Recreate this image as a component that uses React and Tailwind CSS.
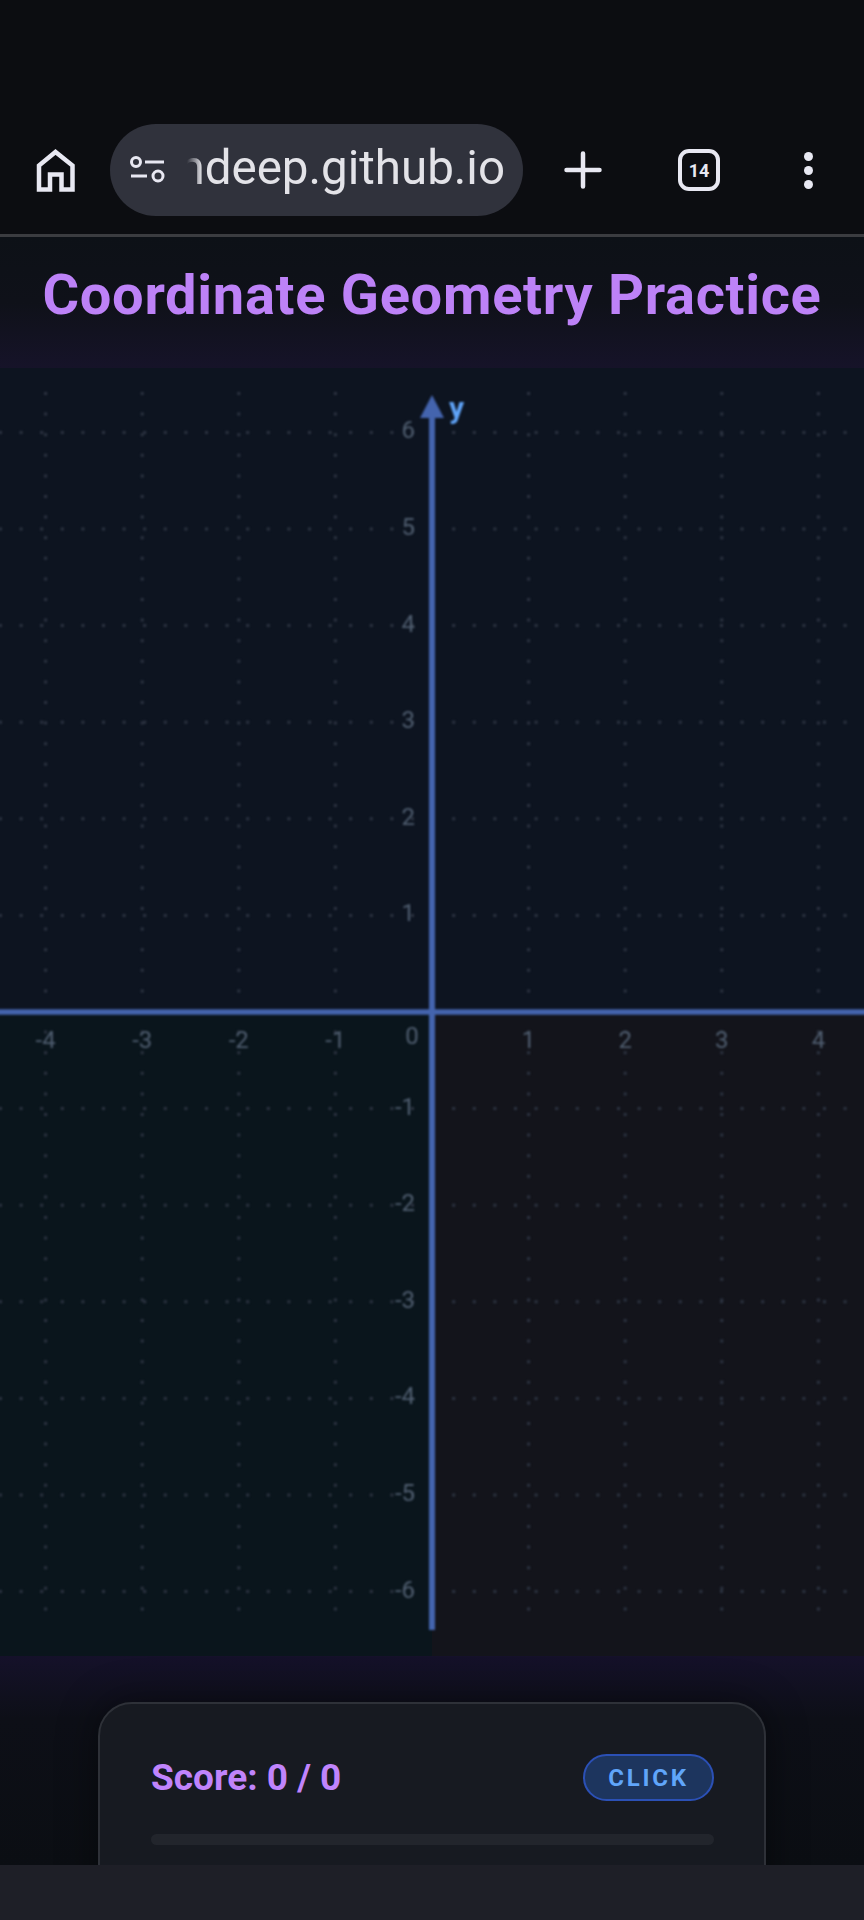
import React from 'react';

const ORIGIN_X = 432;
const ORIGIN_Y = 644;
const UNIT = 96.6;
const X_TICKS = [-4, -3, -2, -1, 1, 2, 3, 4];
const Y_TICKS = [6, 5, 4, 3, 2, 1, -1, -2, -3, -4, -5, -6];

const BrowserBar = () => (
  <header className="h-[237px] shrink-0 flex items-end bg-[#0c0d11] border-b-[3px] border-[#3b3c40] text-[#e8e8f2] pb-[18px]">
    <div className="h-[92px] w-full flex items-center">
      <svg width="40" height="43" viewBox="0 0 40 43" className="ml-[36px] shrink-0" fill="none" stroke="currentColor" strokeWidth="4.500">
        <path d="M3 40.500V16.500L19.500 3L36.500 16.500V40.500H25.500V25.500H14V40.500Z" strokeLinejoin="miter" />
      </svg>
      <div className="ml-[34px] w-[413px] h-[92px] shrink-0 rounded-full bg-[#30323c] flex items-center overflow-hidden">
        <svg width="36" height="30" viewBox="0 0 36 30" className="ml-[20px] shrink-0" fill="none" stroke="currentColor" strokeWidth="3">
          <circle cx="6" cy="7" r="4.500" />
          <path d="M15 7H34M1 21H17" />
          <circle cx="28" cy="21" r="5" />
        </svg>
        <div className="ml-[18px] w-[321px] shrink-0 overflow-hidden flex justify-end pb-[2px] [mask-image:linear-gradient(90deg,transparent_3px,black_18px)]">
          <span className="whitespace-nowrap text-[47.500px] leading-none text-[#e3e3e8] font-['Roboto',sans-serif]">
            ndeep.github.io
          </span>
        </div>
      </div>
      <svg width="38" height="38" viewBox="0 0 38 38" className="ml-[41px] shrink-0" fill="none" stroke="currentColor" strokeWidth="4.500" strokeLinecap="round">
        <path d="M19 2.500V35.500M2.500 19H35.500" />
      </svg>
      <div className="ml-[76px] w-[42px] h-[42px] shrink-0 rounded-[11px] border-[4px] border-[#e8e8f2] flex items-center justify-center text-[18px] font-bold font-['Roboto',sans-serif]">
        14
      </div>
      <div className="ml-[84px] flex flex-col gap-[5px] shrink-0">
        <span className="block w-[9px] h-[9px] rounded-full bg-[#e8e8f2]" />
        <span className="block w-[9px] h-[9px] rounded-full bg-[#e8e8f2]" />
        <span className="block w-[9px] h-[9px] rounded-full bg-[#e8e8f2]" />
      </div>
    </div>
  </header>
);

const Chart = () => (
  <svg width="864" height="1288" viewBox="0 0 864 1288" className="block shrink-0">
    <rect x="0" y="0" width="864" height={ORIGIN_Y} fill="#0d1420" />
    <rect x="0" y={ORIGIN_Y} width={ORIGIN_X} height={1288 - ORIGIN_Y} fill="#0a151c" />
    <rect x={ORIGIN_X} y={ORIGIN_Y} width={864 - ORIGIN_X} height={1288 - ORIGIN_Y} fill="#13141b" />
    <g className="blur-[0.9px]">
      {/* dotted grid */}
      {Y_TICKS.map((t) => (
        <line key={t} x1="-1" x2="864" y1={ORIGIN_Y - t * UNIT} y2={ORIGIN_Y - t * UNIT} stroke="#2d3442" strokeWidth="3" strokeDasharray="3 17.600" />
      ))}
      {X_TICKS.map((t) => (
        <line key={t} x1={ORIGIN_X + t * UNIT} x2={ORIGIN_X + t * UNIT} y1="24" y2="1250" stroke="#2d3442" strokeWidth="3" strokeDasharray="3 17.600" />
      ))}
      {/* axes */}
      <line x1="-4" x2="868" y1={ORIGIN_Y} y2={ORIGIN_Y} stroke="#4464ae" strokeWidth="5.500" />
      <line x1={ORIGIN_X} x2={ORIGIN_X} y1="44" y2="1262" stroke="#4464ae" strokeWidth="6" />
      <path d="M432 27L444 50H420Z" fill="#4464ae" />
      <text x="449" y="50" fill="#60a5fa" fontSize="30" fontWeight="700" fontFamily="Roboto, sans-serif">y</text>
      {/* labels */}
      {Y_TICKS.map((t) => (
        <text key={t} x="415" y={ORIGIN_Y - t * UNIT + 6} textAnchor="end" fill="#505e70" fontSize="24" fontFamily="Roboto, sans-serif">{t}</text>
      ))}
      {X_TICKS.map((t) => (
        <text key={t} x={ORIGIN_X + t * UNIT} y={ORIGIN_Y + 36} textAnchor="middle" fill="#505e70" fontSize="24" fontFamily="Roboto, sans-serif">{t}</text>
      ))}
      <text x="412" y={ORIGIN_Y + 32} textAnchor="middle" fill="#505e70" fontSize="24" fontFamily="Roboto, sans-serif">0</text>
    </g>
  </svg>
);

const App = () => {
  return (
    <div className="w-[864px] h-[1920px] flex flex-col overflow-hidden bg-[#0c0f15] font-['Roboto',sans-serif]">
      <BrowserBar />
      <div className="h-[131px] shrink-0 bg-gradient-to-b from-[#0d1117] via-[#0f1119] to-[#161329]">
        <h1 className="pt-[26px] text-center text-[56px] leading-[64px] font-bold tracking-[0.700px] text-[#bd82f7] whitespace-nowrap">
          Coordinate Geometry Practice
        </h1>
      </div>
      <Chart />
      <div className="h-[209px] shrink-0 bg-gradient-to-b from-[#15112a] via-[#0d0f17] via-[30%] to-[#0b0e13] flex justify-center pt-[46px]">
        <section className="w-[668px] h-[240px] shrink-0 rounded-t-[34px] bg-[#171a21] border-[2px] border-[#2e3138] shadow-[0_0_40px_rgba(0,0,0,0.45)] pl-[51px] pr-[50px] pt-[50px]">
          <div className="flex items-center justify-between">
            <span className="text-[37px] leading-[47px] font-bold text-[#c084fc]">Score: 0 / 0</span>
            <span className="w-[131px] h-[47px] rounded-full bg-[#1d355e] border-[2px] border-[#2b50b5] flex items-center justify-center text-[24px] font-bold tracking-[2.800px] text-[#60a5fa]">
              CLICK
            </span>
          </div>
          <div className="mt-[33px] h-[11px] rounded-full bg-[#22252c]" />
        </section>
      </div>
      <div className="flex-1 bg-[#1e1f27] relative z-10" />
    </div>
  );
};

export default App;
